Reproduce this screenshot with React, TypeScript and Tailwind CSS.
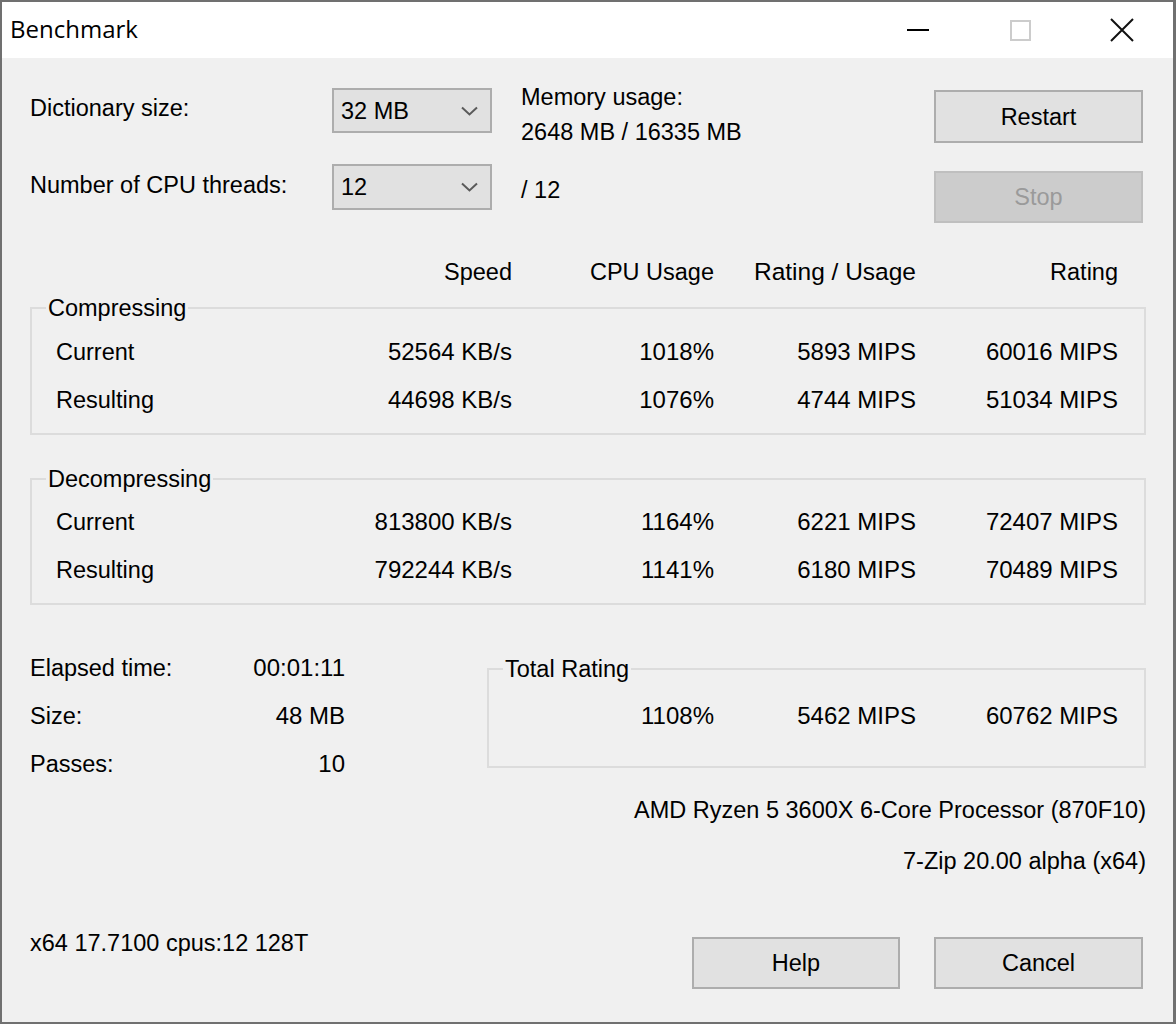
import type { ReactNode } from "react";

const cols = "grid grid-cols-[256px_200px_202px_202px_202px]";

function Combo({ value }: { value: string }) {
  return (
    <div className="flex items-center justify-between border-2 border-[#adadad] bg-[#e1e1e1] pl-[7px] pr-[12px] h-full">
      <span className="leading-[28px]">{value}</span>
      <svg width="17" height="10" viewBox="0 0 17 10">
        <path d="M1 1.5 L8.5 8.5 L16 1.5" fill="none" stroke="#5a5a5a" strokeWidth="2" />
      </svg>
    </div>
  );
}

function Btn({
  label,
  disabled,
  className = "",
}: {
  label: string;
  disabled?: boolean;
  className?: string;
}) {
  return (
    <div
      className={`flex items-center justify-center border-2 ${
        disabled
          ? "border-[#bfbfbf] bg-[#cccccc] text-[#9a9a9a]"
          : "border-[#adadad] bg-[#e1e1e1] text-black"
      } ${className}`}
    >
      <span className="leading-[28px]">{label}</span>
    </div>
  );
}

function Group({
  title,
  className = "",
  children,
}: {
  title: string;
  className?: string;
  children: ReactNode;
}) {
  return (
    <fieldset className={`border-2 border-[#dcdcdc] ${className}`}>
      <legend className="ml-[14px] px-[2px] leading-[28px]">{title}</legend>
      {children}
    </fieldset>
  );
}

function DataRow({ label, v }: { label: string; v: string[] }) {
  return (
    <div className={`${cols} leading-[28px]`}>
      <span>{label}</span>
      {v.map((x, i) => (
        <span key={i} className="text-right text-[24px]">
          {x}
        </span>
      ))}
    </div>
  );
}

export default function App() {
  return (
    <div className="w-[1176px] h-[1024px] border-2 border-r-[3px] border-[#707070] bg-[#f0f0f0] flex flex-col text-black text-[23.5px] font-['Liberation_Sans',Arial,sans-serif]">
      {/* title bar */}
      <div className="h-[56px] bg-white flex items-center shrink-0">
        <span className="pl-[8px] text-[24px] font-['Open_Sans',sans-serif] leading-[28px] -mt-[2px]">
          Benchmark
        </span>
        <div className="ml-auto flex h-full">
          <div className="w-[102px] flex items-center justify-center">
            <div className="w-[22px] h-[2px] bg-black" />
          </div>
          <div className="w-[102px] flex items-center justify-center">
            <div className="w-[21px] h-[21px] border-2 border-[#cccccc]" />
          </div>
          <div className="w-[102px] flex items-center justify-center">
            <svg width="24" height="24" viewBox="0 0 24 24">
              <path d="M1 1 L23 23 M23 1 L1 23" stroke="#111" strokeWidth="2" />
            </svg>
          </div>
        </div>
      </div>

      {/* body */}
      <div className="flex-1 flex flex-col pl-[28px] pr-[27px]">
        {/* settings */}
        <div className="flex h-[167px] shrink-0">
          <div className="w-[302px] flex flex-col leading-[28px]">
            <span className="mt-[36px]">Dictionary size:</span>
            <span className="mt-[49px]">Number of CPU threads:</span>
          </div>
          <div className="w-[160px] flex flex-col">
            <div className="mt-[30px] h-[45px]">
              <Combo value="32 MB" />
            </div>
            <div className="mt-[31px] h-[46px]">
              <Combo value="12" />
            </div>
          </div>
          <div className="ml-[29px] flex-1 flex flex-col leading-[28px]">
            <span className="mt-[25px]">Memory usage:</span>
            <span className="mt-[7px]">2648 MB / 16335 MB</span>
            <span className="mt-[30px]">/ 12</span>
          </div>
          <div className="w-[209px] mr-[3px] flex flex-col">
            <Btn label="Restart" className="mt-[32px] h-[53px]" />
            <Btn label="Stop" disabled className="mt-[28px] h-[52px]" />
          </div>
        </div>

        {/* header */}
        <div className={`${cols} mt-[33px] pl-[26px] leading-[28px]`}>
          <span />
          <span className="text-right">Speed</span>
          <span className="text-right">CPU Usage</span>
          <span className="text-right text-[24.5px]">Rating / Usage</span>
          <span className="text-right">Rating</span>
        </div>

        <Group title="Compressing" className="mt-[8px] w-[1116px]">
          <div className="pl-[24px] pt-[16px] pb-[19px] flex flex-col gap-[20px]">
            <DataRow label="Current" v={["52564 KB/s", "1018%", "5893 MIPS", "60016 MIPS"]} />
            <DataRow label="Resulting" v={["44698 KB/s", "1076%", "4744 MIPS", "51034 MIPS"]} />
          </div>
        </Group>

        <Group title="Decompressing" className="mt-[30px] w-[1116px]">
          <div className="pl-[24px] pt-[15px] pb-[19px] flex flex-col gap-[20px]">
            <DataRow label="Current" v={["813800 KB/s", "1164%", "6221 MIPS", "72407 MIPS"]} />
            <DataRow label="Resulting" v={["792244 KB/s", "1141%", "6180 MIPS", "70489 MIPS"]} />
          </div>
        </Group>

        {/* totals */}
        <div className="mt-[49px] flex items-start h-[124px] shrink-0">
          <div className="w-[315px] flex flex-col gap-[20px] leading-[28px]">
            <div className="flex justify-between">
              <span>Elapsed time:</span>
              <span className="text-[24px]">00:01:11</span>
            </div>
            <div className="flex justify-between">
              <span>Size:</span>
              <span className="text-[24px]">48 MB</span>
            </div>
            <div className="flex justify-between">
              <span>Passes:</span>
              <span className="text-[24px]">10</span>
            </div>
          </div>
          <Group title="Total Rating" className="ml-[142px] mt-[1px] w-[659px]">
            <div className="pt-[19px] pb-[36px] grid grid-cols-[23px_202px_202px_202px] leading-[28px] text-[24px]">
              <span />
              <span className="text-right">1108%</span>
              <span className="text-right">5462 MIPS</span>
              <span className="text-right">60762 MIPS</span>
            </div>
          </Group>
        </div>

        <div className="mt-[18px] text-right leading-[28px]">
          AMD Ryzen 5 3600X 6-Core Processor (870F10)
        </div>
        <div className="mt-[23px] text-right leading-[28px]">7-Zip 20.00 alpha (x64)</div>

        <div className="mt-[54px] flex items-start">
          <span className="flex-1 leading-[28px]">x64 17.7100 cpus:12 128T</span>
          <Btn label="Help" className="mt-[8px] w-[208px] h-[52px]" />
          <Btn label="Cancel" className="mt-[8px] ml-[34px] w-[209px] h-[52px] mr-[3px]" />
        </div>
      </div>
    </div>
  );
}
